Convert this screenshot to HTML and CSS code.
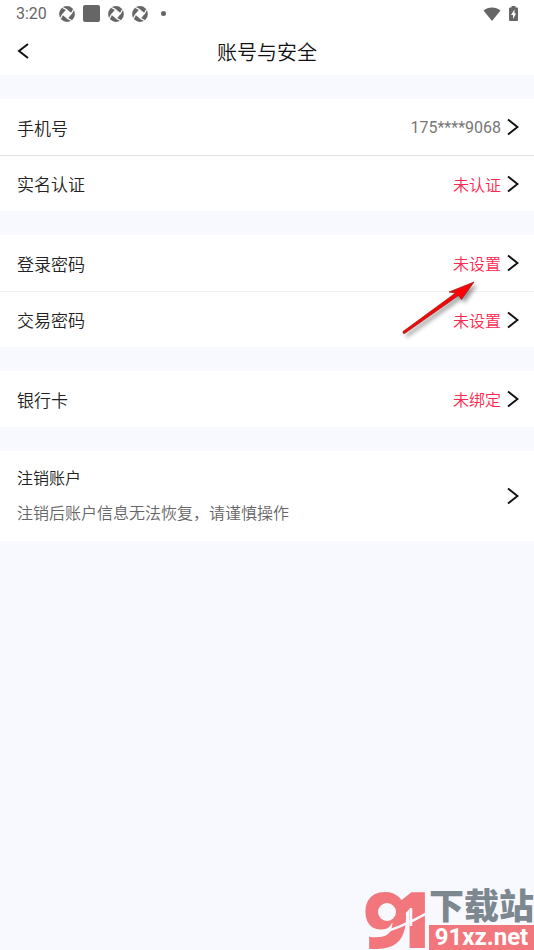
FILE: index.html
```html
<!DOCTYPE html>
<html lang="zh-CN">
<head>
<meta charset="utf-8">
<meta name="viewport" content="width=device-width, initial-scale=1">
<title>账号与安全</title>
<link rel="stylesheet" href="styles.css">
</head>
<body>
<svg class="defs" aria-hidden="true">
  <symbol id="chevron" viewBox="0 0 12 18"><path d="M1 1.500 10.500 9 1 16.500" fill="none" stroke="currentColor" stroke-width="2"/></symbol>
  <symbol id="shutter" viewBox="0 0 16 16">
    <circle cx="8" cy="8" r="7.900" fill="currentColor"/>
    <path d="M7.500 3 13 7.500 8.500 13 3 8.500Z" fill="#fff"/>
    <path d="M8 3.800 3.500 1.500M12.200 8 14.500 3.500M8 12.200 12.500 14.500M3.800 8 1.500 12.500" stroke="#fff" stroke-width="1.300"/>
  </symbol>
</svg>
<header class="header">
  <div class="status">
    <span class="clock">3:20</span>
    <svg class="app"><use href="#shutter"/></svg>
    <span class="square"></span>
    <svg class="app"><use href="#shutter"/></svg>
    <svg class="app"><use href="#shutter"/></svg>
    <span class="dot"></span>
    <svg class="wifi" viewBox="0 0 18 14"><path d="M9 14 .5 3.500C5-.5 13-.5 17.500 3.500Z" fill="currentColor"/></svg>
    <svg class="battery" viewBox="0 0 9 15"><path d="M2.500 0h4v1.500H8q1 0 1 1V14q0 1-1 1H1q-1 0-1-1V2.500q0-1 1-1h1.500Z" fill="currentColor"/><path d="M5.500 3.500 2 9h2v4L7.200 7.500H5.500Z" fill="#fff"/></svg>
  </div>
  <nav class="nav">
    <a class="back" href="#" aria-label="返回"><svg viewBox="0 0 12 18"><path d="M11 2 2 9l9 7" fill="none" stroke="currentColor" stroke-width="2"/></svg></a>
    <h1>账号与安全</h1>
  </nav>
</header>
<main class="groups">
  <section class="group">
    <a class="row" href="#"><span class="label">手机号</span><span class="value phone">175****9068</span><svg class="chevron"><use href="#chevron"/></svg></a>
    <a class="row" href="#"><span class="label">实名认证</span><span class="value">未认证</span><svg class="chevron"><use href="#chevron"/></svg></a>
  </section>
  <section class="group light">
    <a class="row" href="#"><span class="label">登录密码</span><span class="value">未设置</span><svg class="chevron"><use href="#chevron"/></svg></a>
    <a class="row" href="#"><span class="label">交易密码</span><span class="value">未设置</span><svg class="chevron"><use href="#chevron"/></svg></a>
    <svg class="pointer" viewBox="0 0 80 60" aria-hidden="true"><path d="M73 2 60.500 19.500 57.500 15.500 3.500 53.500Q1.500 54 2 51.500L54.500 13l-6.500-1Z" fill="#fa0505" stroke="#8d2020" stroke-width=".7"/></svg>
  </section>
  <section class="group">
    <a class="row" href="#"><span class="label">银行卡</span><span class="value">未绑定</span><svg class="chevron"><use href="#chevron"/></svg></a>
  </section>
  <section class="group">
    <a class="row tall" href="#">
      <span class="label close"><span>注销账户</span><span class="hint">注销后账户信息无法恢复，请谨慎操作</span></span>
      <svg class="chevron"><use href="#chevron"/></svg>
    </a>
  </section>
</main>
<aside class="watermark">
  <svg class="mark" viewBox="0 0 66 60"><text class="digits" x="0 26" y="58">91</text><circle cx="24" cy="22" r="9" fill="#f8f9ff"/><path d="M9 46Q38 38 66 22M48 18v18" fill="none" stroke="#f8f9ff" stroke-width="2.500"/></svg>
  <div class="site"><span class="name">下载站</span><span class="domain">91xz.net</span></div>
</aside>
</body>
</html>
```
FILE: styles.css
```css
* { box-sizing: border-box; }
body {
  position: relative;
  margin: 0;
  min-height: 100vh;
  background: #f8f9ff;
  color: #222;
  font-family: Roboto, "Noto Sans CJK SC", sans-serif;
  font-weight: 350;
}
a { color: inherit; text-decoration: none; }
svg { display: block; flex: none; }
.defs { position: absolute; width: 0; height: 0; }
.header { background: #fff; }
.status {
  display: flex;
  align-items: center;
  gap: 8px;
  height: 27px;
  padding: 0 16px;
  color: #666;
}
.clock { margin-right: 4px; font-size: 16px; font-weight: 400; }
.app { width: 16px; height: 16px; }
.square { width: 17px; height: 17px; border-radius: 2px; background: #666; }
.dot { width: 5px; height: 5px; margin-left: 5px; border-radius: 50%; background: #666; }
.wifi { width: 18px; height: 14px; margin-left: auto; }
.battery { width: 9px; height: 15px; }
.nav {
  display: grid;
  grid-template-columns: 1fr auto 1fr;
  align-items: center;
  height: 48px;
  padding: 0 17px;
  color: #111;
}
.back svg { width: 12px; height: 18px; }
h1 { margin: 0; font-size: 20px; font-weight: 350; }
.groups { display: grid; gap: 24px; padding: 24px 0; }
.group { position: relative; background: #fff; }
.row {
  display: flex;
  align-items: center;
  gap: 6px;
  height: 56px;
  padding: 0 15px 0 17px;
}
.row + .row { border-top: 1px solid #e2e2e2; }
.light .row + .row { border-color: #f2f2f4; }
.label { flex: 1; font-size: 17px; }
.value { color: #ff2750; font-size: 16px; }
.phone { color: #777; font-weight: 400; }
.chevron { width: 12px; height: 18px; color: #111; }
.tall { height: 90px; }
.close { display: grid; gap: 11px; font-size: 16px; line-height: 24px; }
.hint { color: #666; }
.pointer {
  position: absolute;
  top: 45px;
  right: 53px;
  width: 80px;
  height: 60px;
  overflow: visible;
  filter: drop-shadow(3px 3px 2px #0006);
  pointer-events: none;
}
.watermark {
  position: absolute;
  right: 0;
  bottom: 0;
  display: flex;
  align-items: flex-end;
}
.mark { width: 66px; height: 60px; }
.digits { fill: #f1777c; font: 900 78px "Open Sans", sans-serif; }
.site { display: grid; }
.name {
  padding-bottom: 4px;
  color: #7d8790;
  font: 900 35px/34px "Noto Sans CJK SC", sans-serif;
}
.domain {
  padding: 0 2px;
  background: #f1777c;
  color: #fff;
  font: 700 24px/25px Roboto, sans-serif;
  text-align: center;
}
```
